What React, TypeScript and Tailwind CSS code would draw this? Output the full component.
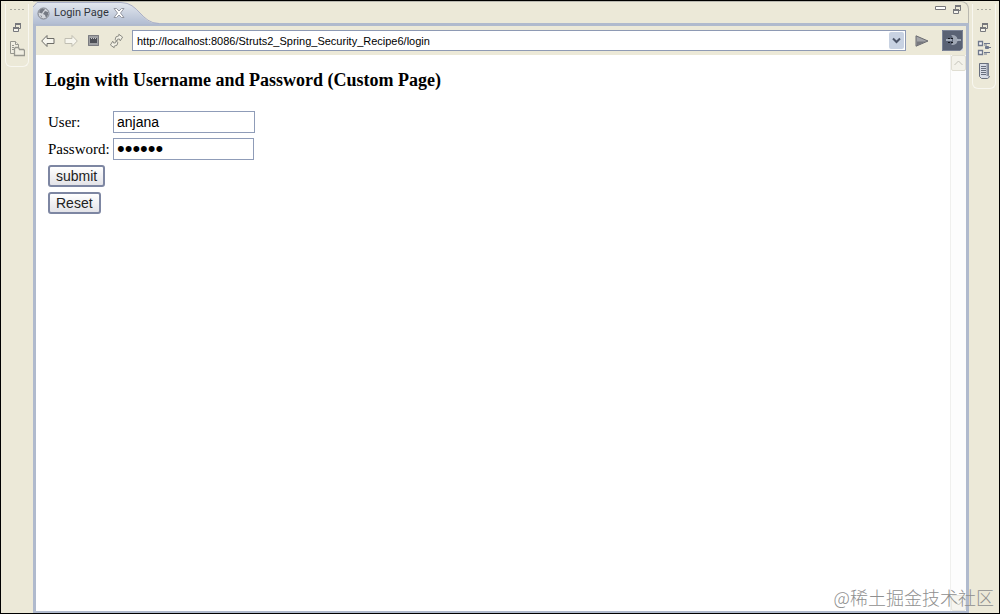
import { useState } from "react"
import type { ReactNode } from "react"

const inputClass =
  "h-[22px] border border-[#8f9cb8] bg-white px-[3px] font-['Liberation_Sans',sans-serif] leading-4 text-black outline-none"

const formButtonClass =
  "h-[22px] rounded-[3px] border-2 border-[#7d86a2] bg-gradient-to-b from-white to-[#e3e3e8] px-[6px] font-['Liberation_Sans',sans-serif] text-[14px] leading-4 text-[#222]"

function GripDots() {
  return (
    <svg width="16" height="4" viewBox="0 0 16 4" fill="#a9a99f" aria-hidden="true">
      <path d="M1 1h2v1H1zM5 1h2v1H5zM9 1h2v1H9zM13 1h2v1h-2z" />
    </svg>
  )
}

function RestoreIcon() {
  return (
    <svg width="10" height="10" viewBox="0 0 10 10" fill="none" stroke="#77787c" aria-hidden="true">
      <path d="M3 1h6" strokeWidth="2" />
      <path d="M3.500 2v2M8.500 2v3.500H7" />
      <path d="M1.500 5.500h5v3h-5z" fill="#f6f5ee" />
      <path d="M1 5h6" strokeWidth="2" />
    </svg>
  )
}

function MinimizeIcon() {
  return (
    <svg width="11" height="10" viewBox="0 0 11 10" fill="#fff" stroke="#77777a" aria-hidden="true">
      <path d="M.5 1.500h10v3H.5z" />
    </svg>
  )
}

function FoldersIcon() {
  return (
    <svg width="16" height="16" viewBox="0 0 16 16" fill="#f0eee2" stroke="#97978f" aria-hidden="true">
      <path d="M1.500 .5h5l3 3v9h-8z" />
      <path d="M6.500 .5v3h3M3 4.500h2M3 6.500h2M3 8.500h2" />
      <path d="M5.500 14.500v-7l1-1h3l1 2h4l1 1v5z" strokeWidth="1.300" />
    </svg>
  )
}

function OutlineIcon() {
  return (
    <svg width="14" height="16" viewBox="0 0 14 16" fill="#f4f4f4" stroke="#6f788d" aria-hidden="true">
      <path d="M1.500 1.500h4v4h-4zM1.500 10.500h4v4h-4z" strokeWidth="1.300" />
      <path d="M8.500 6.500h3v2h-3z" fill="#6f788d" />
      <path d="M7 3.500h6M7 5h3M7 12.500h6M7 14h3M12 7.500h2" />
    </svg>
  )
}

function TaskListIcon() {
  return (
    <svg width="12" height="16" viewBox="0 0 12 16" fill="#d9dde6" stroke="#686f7e" aria-hidden="true">
      <path d="M1.500 .5h9v12l1 1.500-2 1.500h-6l-2-2z" />
      <path d="M3 3.500h5M3 5.500h5M3 7.500h5M3 9.500h5M3 11.500h5" />
      <path d="M9.500 1v12" stroke="#8f96a6" strokeWidth="2" />
    </svg>
  )
}

function GlobeIcon() {
  return (
    <svg width="13" height="13" viewBox="0 0 13 13" aria-hidden="true">
      <circle cx="6.500" cy="6.500" r="5.500" fill="#d3d6dc" stroke="#7b7f88" />
      <path d="M3 2.500l3-1 2 1-2 2-1 2-3-1zM8 4l3 1v3l-2 3-1-3-2-1z" fill="#757a84" />
      <path d="M3 8l2 1v2z" fill="#8a8e97" />
    </svg>
  )
}

function CloseIcon() {
  return (
    <svg width="12" height="12" viewBox="0 0 12 12" aria-hidden="true">
      <path
        d="M1 1.500h2.500L6 4l2.500-2.500H11L7.500 6 11 10.500H8.500L6 8l-2.500 2.500H1L4.500 6z"
        fill="#fff"
        stroke="#8b8f98"
        strokeWidth=".9"
      />
    </svg>
  )
}

function BackIcon() {
  return (
    <svg width="14" height="14" viewBox="0 0 14 14" aria-hidden="true">
      <path d="M.7 7L6 1.500v3h7v5H6v3z" fill="#f7f6ee" stroke="#6d6d68" />
    </svg>
  )
}

function ForwardIcon() {
  return (
    <svg width="14" height="14" viewBox="0 0 14 14" aria-hidden="true">
      <path d="M13.300 7L8 1.500v3H1v5h7v3z" fill="#f7f6ee" stroke="#c0beb2" />
    </svg>
  )
}

function StopIcon() {
  return (
    <svg width="13" height="13" viewBox="0 0 13 13" aria-hidden="true">
      <path d="M1 1h11v11H1z" fill="#9fa0a3" />
      <path d="M1.500 1.500h10v10h-10z" fill="none" stroke="#7b7c80" />
      <path d="M3 4h7v5H3z" fill="#4c4e55" />
      <path d="M4 4.500h1M6 4.500h1M8 4.500h1" stroke="#c9cacd" />
    </svg>
  )
}

function RefreshIcon() {
  return (
    <svg width="15" height="16" viewBox="0 0 16 16" fill="#f4f2e6" stroke="#85857f" aria-hidden="true">
      <path d="M6.500 6.500l1-3 3-1V.8l4 3-2.500 4-1-2-2 .3-.5 2z" />
      <path d="M9.500 9.500l-1 3-3 1v1.700l-4-3 2.500-4 1 2 2-.3.5-2z" />
    </svg>
  )
}

function GoIcon() {
  return (
    <svg width="14" height="12" viewBox="0 0 14 12" aria-hidden="true">
      <path d="M1 .8L13 6 1 11.200z" fill="#a3a4a8" stroke="#6a6b70" />
      <path d="M2 6.500h9L2 10.500z" fill="#77787e" />
    </svg>
  )
}

function ExternalIcon() {
  return (
    <svg width="21" height="21" viewBox="0 0 21 21" aria-hidden="true">
      <path d="M0 0h21v21H0z" fill="#5a6274" />
      <path d="M.5 .5h20v20H.5z" fill="none" stroke="#7b8396" />
      <path d="M9 5c5 0 6.500 2 6.500 5S14 15 9 15c1-1 2-2 2-5s-1-4-2-5z" fill="#a0a7b4" />
      <path d="M4 10h6M15 10h4" stroke="#bcc3cf" strokeWidth="1.500" />
      <path d="M6 8h2v1H6zM9 8h2v1H9zM6 12h2v1H6zM9 12h2v1H9z" fill="#14171e" />
      <path d="M18 21l3-3v3z" fill="#d9dce2" />
    </svg>
  )
}

function ToolButton({ label, children }: { label: string; children: ReactNode }) {
  return (
    <button type="button" aria-label={label} className="flex shrink-0 items-center justify-center">
      {children}
    </button>
  )
}

function EditorTab() {
  return (
    <div className="relative flex h-[22px] w-[126px] items-center pl-1">
      <svg className="absolute inset-0" width="126" height="22" viewBox="0 0 126 22" aria-hidden="true">
        <defs>
          <linearGradient id="tab" x1="0" y1="0" x2="0" y2="1">
            <stop offset="0" stopColor="#e2e7ee" />
            <stop offset="1" stopColor="#b2bdd2" />
          </linearGradient>
        </defs>
        <path d="M0 22V5l4-4h84c18 0 20 21 38 21z" fill="url(#tab)" />
        <path d="M0 5l4-4.500h84c18 0 20 21 38 21" fill="none" stroke="#a9afc8" />
      </svg>
      <div className="relative flex items-center gap-1">
        <GlobeIcon />
        <span className="w-[55px] whitespace-nowrap">Login Page</span>
        <ToolButton label="Close tab">
          <CloseIcon />
        </ToolButton>
      </div>
    </div>
  )
}

function AddressBar() {
  const [url, setUrl] = useState("http://localhost:8086/Struts2_Spring_Security_Recipe6/login")

  return (
    <div className="flex h-[29px] items-center bg-[#ece9d8] pl-[5px] pr-[3px]">
      <div className="flex items-center gap-[9px]">
        <ToolButton label="Back">
          <BackIcon />
        </ToolButton>
        <ToolButton label="Forward">
          <ForwardIcon />
        </ToolButton>
        <ToolButton label="Stop">
          <StopIcon />
        </ToolButton>
        <ToolButton label="Refresh">
          <RefreshIcon />
        </ToolButton>
      </div>
      <div className="ml-2 flex h-[21px] grow items-center border border-[#8e9ab4] bg-white">
        <input
          aria-label="Address"
          value={url}
          onChange={(e) => setUrl(e.target.value)}
          className="min-w-0 grow px-1 font-['Liberation_Sans',sans-serif] text-[11px] leading-4 text-black outline-none"
        />
        <button
          type="button"
          aria-label="Show history"
          className="mr-px flex h-[17px] w-[15px] items-center justify-center rounded-[2px] bg-[#c8d2e2]"
        >
          <svg width="9" height="7" viewBox="0 0 9 7" fill="none" stroke="#4c5568" strokeWidth="2" aria-hidden="true">
            <path d="M1 1.500l3.500 3.500L8 1.500" />
          </svg>
        </button>
      </div>
      <div className="ml-[9px] flex items-center gap-[13px]">
        <ToolButton label="Go">
          <GoIcon />
        </ToolButton>
        <ToolButton label="Open in external browser">
          <ExternalIcon />
        </ToolButton>
      </div>
    </div>
  )
}

function LoginForm() {
  return (
    <form
      onSubmit={(e) => e.preventDefault()}
      className="flex flex-col items-start gap-[5px] pl-[3px] font-['Liberation_Serif',serif] text-[15px] leading-5 text-black"
    >
      <div className="flex items-center">
        <label htmlFor="username" className="w-[65px]">
          User:
        </label>
        <input id="username" type="text" defaultValue="anjana" className={`${inputClass} w-[142px] text-[14px]`} />
      </div>
      <div className="flex items-center">
        <label htmlFor="password" className="w-[65px]">
          Password:
        </label>
        <input id="password" type="password" defaultValue="secret" className={`${inputClass} w-[141px] text-[22px]`} />
      </div>
      <button type="submit" className={formButtonClass}>
        submit
      </button>
      <button type="reset" className={formButtonClass}>
        Reset
      </button>
    </form>
  )
}

function ScrollTrack() {
  return (
    <div className="flex w-4 shrink-0 flex-col justify-between border-l border-[#f0f0ee] bg-[#fdfdfd]">
      <button
        type="button"
        aria-label="Scroll up"
        className="flex h-4 items-center justify-center rounded-[2px] border border-[#e0ded2] bg-[#f3f2ea]"
      >
        <svg width="9" height="6" viewBox="0 0 9 6" fill="none" stroke="#c3c2b8" aria-hidden="true">
          <path d="M.5 5l4-4 4 4" />
        </svg>
      </button>
      <button
        type="button"
        aria-label="Scroll down"
        className="flex h-4 items-center justify-center rounded-[2px] border border-[#e8e7e0] bg-[#f6f5f0]"
      >
        <svg width="9" height="6" viewBox="0 0 9 6" fill="none" stroke="#c3c2b8" aria-hidden="true">
          <path d="M.5 1l4 4 4-4" />
        </svg>
      </button>
    </div>
  )
}

export default function App() {
  return (
    <div className="relative flex min-h-screen border border-black bg-[#ece9d8] font-['Roboto',sans-serif] text-[11px] leading-4 text-[#30343c]">
      {/* Left fast-view bar */}
      <aside className="w-8 shrink-0 pl-1 pt-[3px]">
        <div className="flex h-[63px] w-6 flex-col items-center rounded-b-md border border-t-0 border-[#f8f7f0] pt-1">
          <GripDots />
          <div className="mt-[11px] flex flex-col items-center gap-2">
            <ToolButton label="Restore">
              <RestoreIcon />
            </ToolButton>
            <ToolButton label="Project Explorer">
              <FoldersIcon />
            </ToolButton>
          </div>
        </div>
      </aside>

      {/* Editor area */}
      <main className="flex min-w-0 grow flex-col">
        <div className="flex h-[22px] items-start justify-between rounded-tr-lg border-r border-t border-[#b9b8b0] pr-[6px]">
          <EditorTab />
          <div className="flex items-center gap-[6px] pt-[3px]">
            <ToolButton label="Minimize">
              <MinimizeIcon />
            </ToolButton>
            <ToolButton label="Restore">
              <RestoreIcon />
            </ToolButton>
          </div>
        </div>
        <div className="flex grow flex-col border-[3px] border-b-2 border-[#b0bacd] bg-white">
          <AddressBar />
          <div className="flex grow">
            <section className="grow pl-[9px] pt-[15px]">
              <h1 className="mb-[21px] font-['Liberation_Serif',serif] text-[18px] leading-5 font-bold text-black">
                Login with Username and Password (Custom Page)
              </h1>
              <LoginForm />
            </section>
            <ScrollTrack />
          </div>
        </div>
      </main>

      {/* Right fast-view bar */}
      <aside className="w-[30px] shrink-0 pl-[3px] pt-[3px]">
        <div className="flex h-[85px] w-6 flex-col items-center rounded-b-md border border-t-0 border-[#f8f7f0] pt-1">
          <GripDots />
          <div className="mt-[11px] flex flex-col items-center gap-[7px]">
            <ToolButton label="Restore">
              <RestoreIcon />
            </ToolButton>
            <ToolButton label="Outline">
              <OutlineIcon />
            </ToolButton>
            <ToolButton label="Task List">
              <TaskListIcon />
            </ToolButton>
          </div>
        </div>
      </aside>

      <span className="pointer-events-none absolute bottom-1 right-[5px] font-['Noto_Sans_CJK_SC',sans-serif] text-[18px] leading-6 font-light text-[#8f8f8f]">
        @稀土掘金技术社区
      </span>
    </div>
  )
}
